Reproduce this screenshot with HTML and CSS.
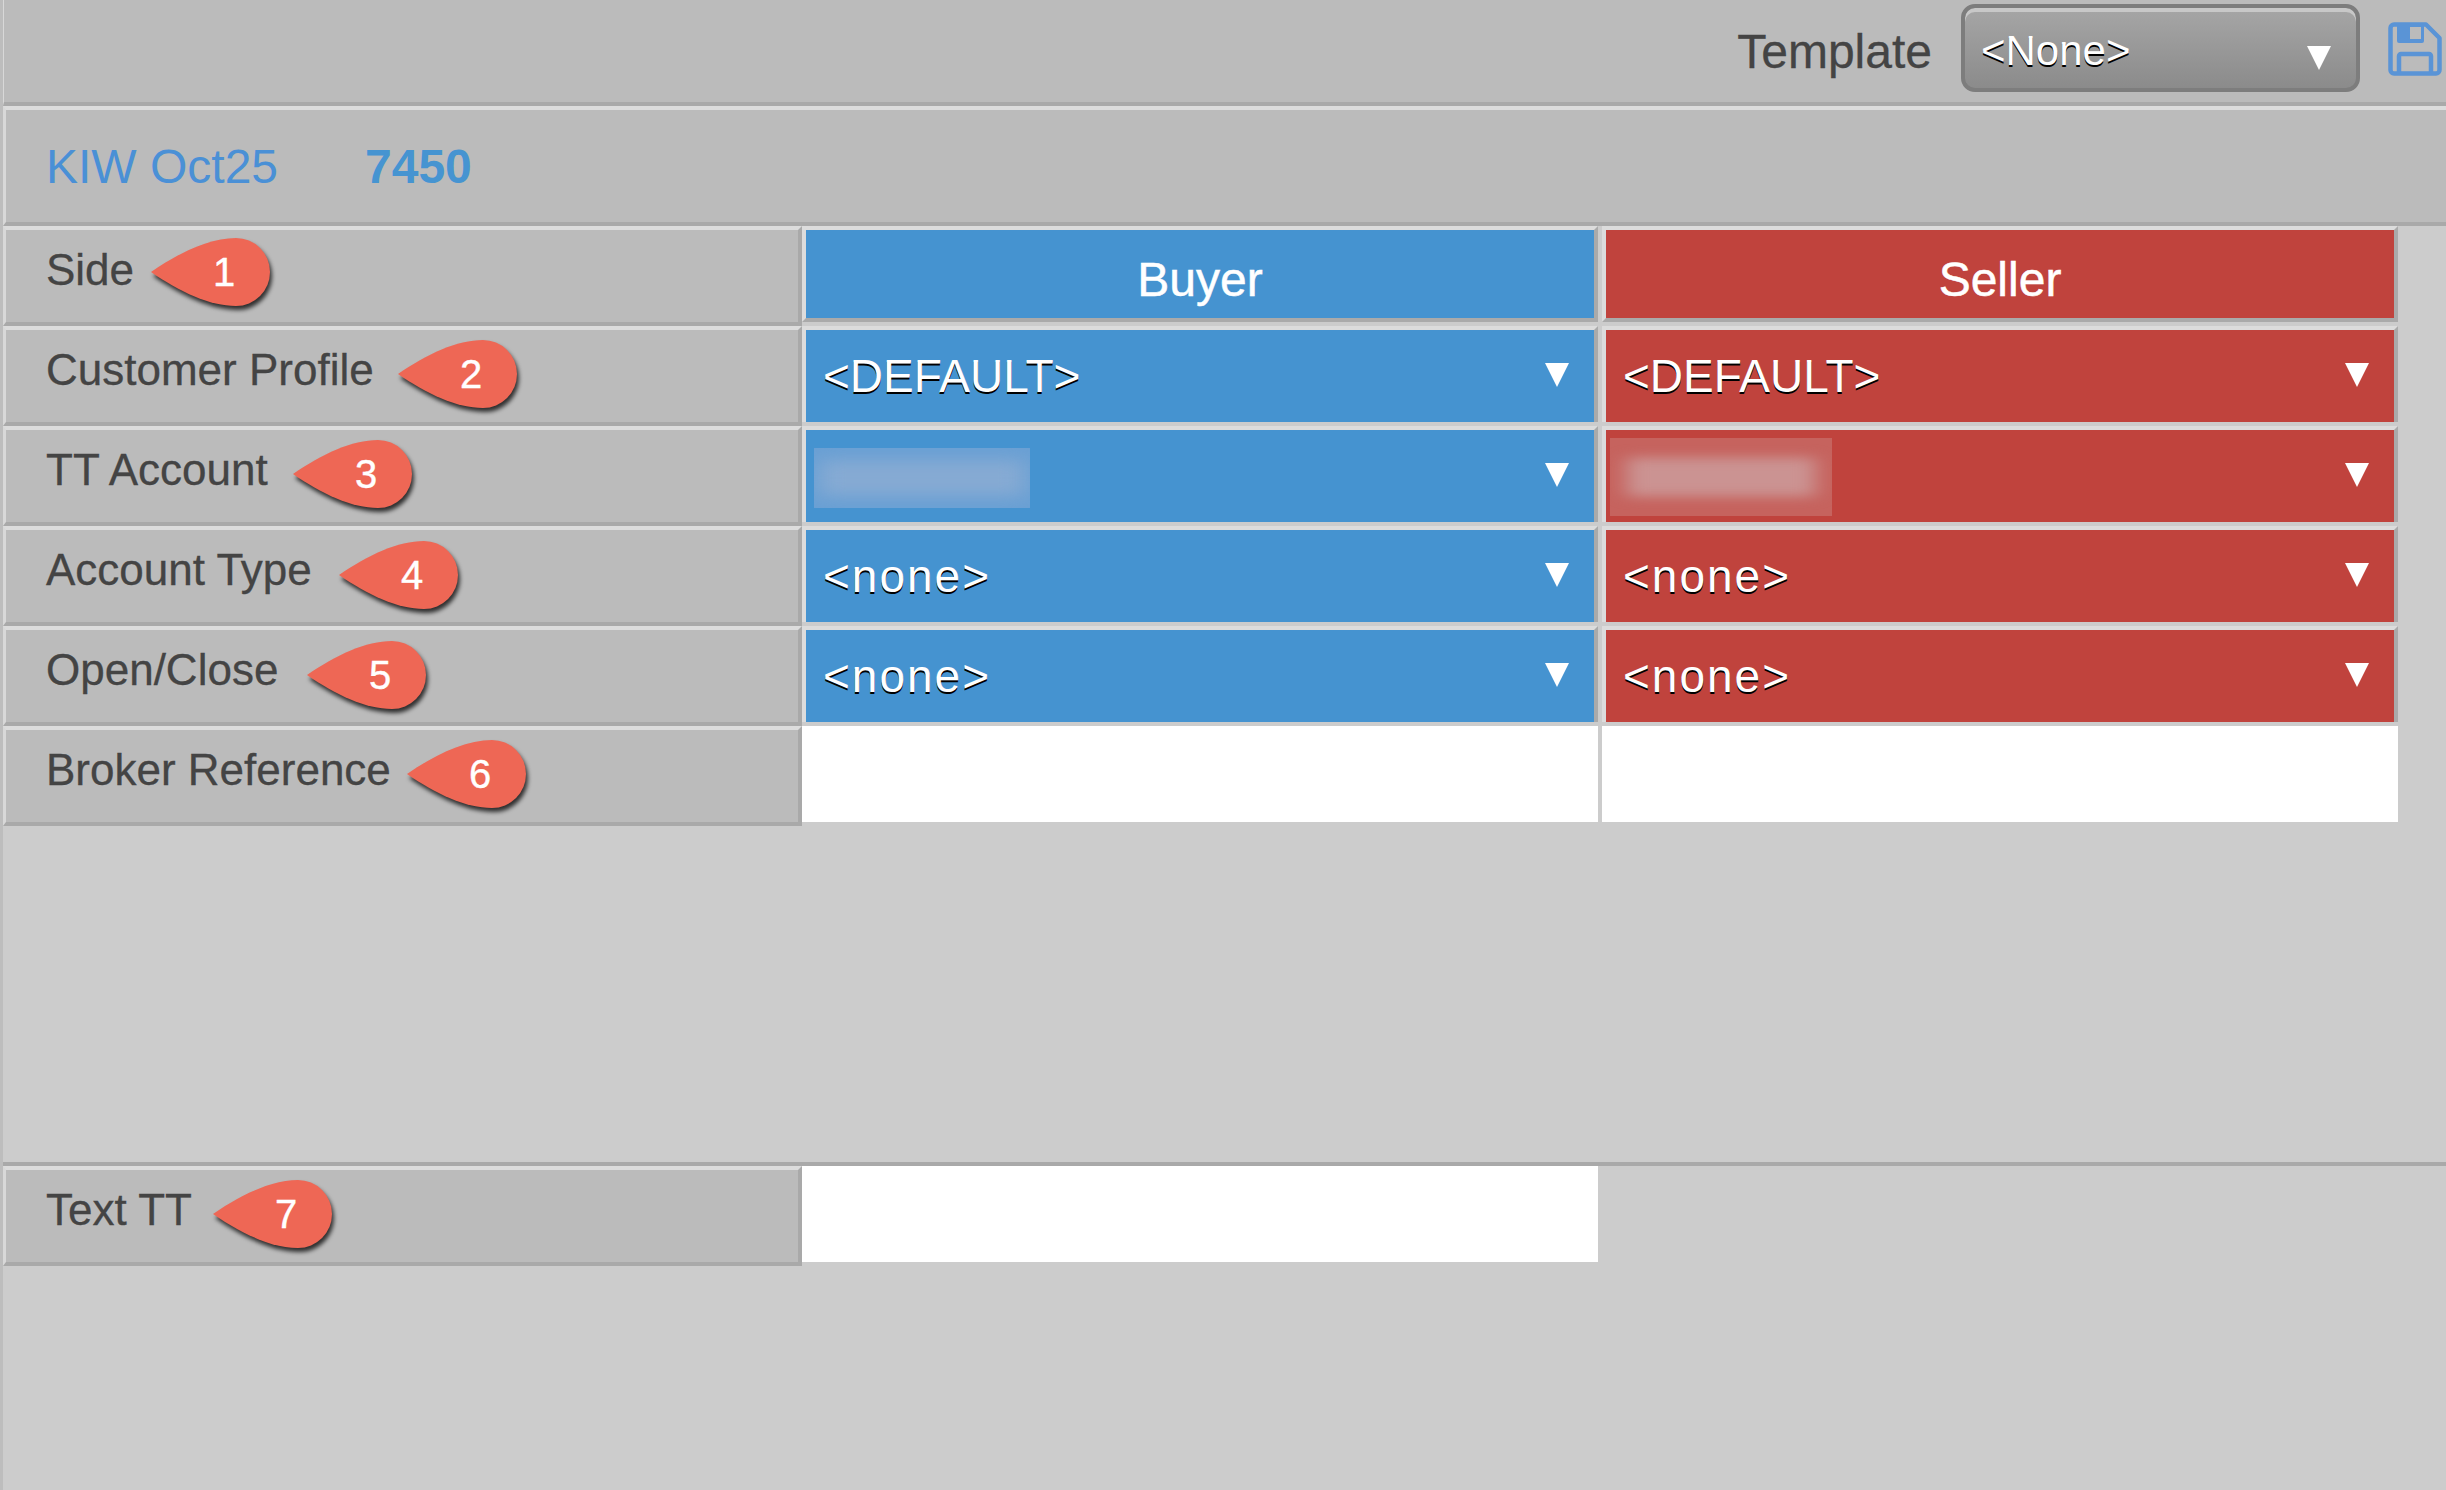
FILE: index.html
```html
<!DOCTYPE html>
<html lang="en">
<head>
<meta charset="utf-8">
<title>Order ticket</title>
<link rel="stylesheet" href="styles.css">
</head>
<body>
<div class="app">
  <header class="toolbar">
    <span class="template-label">Template</span>
    <div class="template-select">
      <span>&lt;None&gt;</span>
      <svg class="arrow" viewBox="0 0 24 24"><path d="M0 0H24L12 24Z"/></svg>
    </div>
    <svg class="save" viewBox="0 0 54 54" fill="none">
      <path d="M6 2.5H38L51.5 16V48A3.5 3.5 0 0 1 48 51.5H6A3.5 3.5 0 0 1 2.5 48V6A3.5 3.5 0 0 1 6 2.5Z" stroke="#5a94d6" stroke-width="4.5" stroke-linejoin="round"/>
      <path d="M9 4H36V19A2 2 0 0 1 34 21H11A2 2 0 0 1 9 19Z" fill="#5a94d6"/>
      <rect x="22" y="5" width="11" height="12" fill="#bbbbbb"/>
      <path d="M11 50V34A2 2 0 0 1 13 32H41A2 2 0 0 1 43 34V50" stroke="#5a94d6" stroke-width="4.5"/>
    </svg>
  </header>

  <div class="title-row">
    <span class="instrument">KIW Oct25</span>
    <span class="price">7450</span>
  </div>

  <div class="form-grid">
    <div class="label">Side
      <div class="marker m1"><svg viewBox="0 0 120 68"><path d="M1 34C30 14 60 0 86 0A34 34 0 0 1 86 68C60 68 30 54 1 34Z"/></svg><span>1</span></div>
    </div>
    <div class="cell head buyer">Buyer</div>
    <div class="cell head seller">Seller</div>

    <div class="label">Customer Profile
      <div class="marker m2"><svg viewBox="0 0 120 68"><path d="M1 34C30 14 60 0 86 0A34 34 0 0 1 86 68C60 68 30 54 1 34Z"/></svg><span>2</span></div>
    </div>
    <div class="cell dropdown buyer"><span class="value">&lt;DEFAULT&gt;</span><svg class="arrow" viewBox="0 0 24 24"><path d="M0 0H24L12 24Z"/></svg></div>
    <div class="cell dropdown seller"><span class="value">&lt;DEFAULT&gt;</span><svg class="arrow" viewBox="0 0 24 24"><path d="M0 0H24L12 24Z"/></svg></div>

    <div class="label">TT Account
      <div class="marker m3"><svg viewBox="0 0 120 68"><path d="M1 34C30 14 60 0 86 0A34 34 0 0 1 86 68C60 68 30 54 1 34Z"/></svg><span>3</span></div>
    </div>
    <div class="cell dropdown buyer"><div class="redact redact-buyer"><div class="smear"></div></div><svg class="arrow" viewBox="0 0 24 24"><path d="M0 0H24L12 24Z"/></svg></div>
    <div class="cell dropdown seller"><div class="redact redact-seller"><div class="smear"></div></div><svg class="arrow" viewBox="0 0 24 24"><path d="M0 0H24L12 24Z"/></svg></div>

    <div class="label">Account Type
      <div class="marker m4"><svg viewBox="0 0 120 68"><path d="M1 34C30 14 60 0 86 0A34 34 0 0 1 86 68C60 68 30 54 1 34Z"/></svg><span>4</span></div>
    </div>
    <div class="cell dropdown buyer"><span class="value lower">&lt;none&gt;</span><svg class="arrow" viewBox="0 0 24 24"><path d="M0 0H24L12 24Z"/></svg></div>
    <div class="cell dropdown seller"><span class="value lower">&lt;none&gt;</span><svg class="arrow" viewBox="0 0 24 24"><path d="M0 0H24L12 24Z"/></svg></div>

    <div class="label">Open/Close
      <div class="marker m5"><svg viewBox="0 0 120 68"><path d="M1 34C30 14 60 0 86 0A34 34 0 0 1 86 68C60 68 30 54 1 34Z"/></svg><span>5</span></div>
    </div>
    <div class="cell dropdown buyer"><span class="value lower">&lt;none&gt;</span><svg class="arrow" viewBox="0 0 24 24"><path d="M0 0H24L12 24Z"/></svg></div>
    <div class="cell dropdown seller"><span class="value lower">&lt;none&gt;</span><svg class="arrow" viewBox="0 0 24 24"><path d="M0 0H24L12 24Z"/></svg></div>

    <div class="label">Broker Reference
      <div class="marker m6"><svg viewBox="0 0 120 68"><path d="M1 34C30 14 60 0 86 0A34 34 0 0 1 86 68C60 68 30 54 1 34Z"/></svg><span>6</span></div>
    </div>
    <div class="cell input"></div>
    <div class="cell input"></div>
  </div>

  <div class="spacer"></div>

  <div class="form-grid">
    <div class="label">Text TT
      <div class="marker m7"><svg viewBox="0 0 120 68"><path d="M1 34C30 14 60 0 86 0A34 34 0 0 1 86 68C60 68 30 54 1 34Z"/></svg><span>7</span></div>
    </div>
    <div class="cell input"></div>
  </div>
</div>
</body>
</html>
```

FILE: styles.css
```css
* { box-sizing: border-box; }

html, body {
  margin: 0;
  height: 1490px;
  overflow: hidden;
  background: #cccccc;
  font-family: "Liberation Sans", Arial, sans-serif;
}

.app {
  display: flex;
  flex-direction: column;
  height: 1490px;
  border-left: 3px solid #bdbdbd;
}

.toolbar {
  display: flex;
  align-items: center;
  justify-content: flex-end;
  flex: none;
  height: 106px;
  padding: 0 4px 0 0;
  background: #bbbbbb;
  border-left: 1px solid #d8d8d8;
  border-bottom: 4px solid #a9a9a9;
}

.template-label {
  margin-right: 29px;
  font-size: 48px;
  color: #444444;
  -webkit-text-stroke: 0.3px #444444;
}

.template-select {
  display: flex;
  align-items: center;
  justify-content: space-between;
  width: 399px;
  height: 88px;
  margin-bottom: 6px;
  margin-right: 28px;
  padding: 6px 25px 0 16px;
  border: 4px solid #7d7d7d;
  border-radius: 14px;
  background: linear-gradient(#a6a6a6, #8b8b8b);
  box-shadow: inset 0 4px 0 #c8c8c8;
  font-size: 42px;
  color: #ffffff;
  text-shadow: 0 2px 0 #000000;
}

.template-select .arrow {
  margin-top: 14px;
}

.save {
  width: 54px;
  height: 54px;
  margin-bottom: 4px;
  flex: none;
}

.arrow {
  width: 24px;
  height: 24px;
  flex: none;
  fill: #ffffff;
}

.title-row {
  display: flex;
  align-items: center;
  flex: none;
  height: 120px;
  padding-left: 40px;
  background: #bbbbbb;
  border-top: 4px solid #dcdcdc;
  border-bottom: 4px solid #a9a9a9;
  border-left: 3px solid #d8d8d8;
  font-size: 48px;
  color: #4a90d6;
}

.instrument {
  width: 319px;
}

.price {
  font-weight: 700;
  color: #4694d1;
}

.form-grid {
  display: grid;
  grid-template-columns: 799px 800px 796px;
  grid-auto-rows: 100px;
  flex: none;
}

.label {
  position: relative;
  display: flex;
  align-items: center;
  padding: 0 0 12px 40px;
  background: #bbbbbb;
  border-top: 4px solid #dcdcdc;
  border-bottom: 4px solid #a9a9a9;
  border-left: 3px solid #d8d8d8;
  border-right: 4px solid #a9a9a9;
  font-size: 44px;
  color: #444444;
  -webkit-text-stroke: 0.3px #444444;
}

.cell {
  margin-bottom: 4px;
}

.buyer,
.input:nth-child(3n + 2) {
  margin-right: 4px;
}

.head,
.dropdown {
  border-top: 4px solid #dcdcdc;
  border-left: 4px solid #dcdcdc;
  border-right: 4px solid #aaaaaa;
  color: #ffffff;
}

.head {
  display: flex;
  align-items: center;
  justify-content: center;
  padding-top: 10px;
  border-bottom: 4px solid #aaaaaa;
  font-size: 48px;
  -webkit-text-stroke: 0.5px #ffffff;
}

.dropdown {
  display: flex;
  align-items: center;
  justify-content: space-between;
  padding: 0 25px 0 17px;
  font-size: 46px;
}

.dropdown .arrow {
  align-self: flex-start;
  margin-top: 33px;
}

.value {
  text-shadow: 0 2px 0 #000000;
}

.lower {
  letter-spacing: 2px;
}

.buyer { background-color: #4593d0; background-clip: padding-box; }
.seller { background-color: #c0433d; background-clip: padding-box; }

.input {
  background: #ffffff;
}

.redact {
  overflow: hidden;
}

.redact-buyer {
  width: 216px;
  height: 60px;
  margin: 4px 0 0 -9px;
  background: #6aa0d4;
}

.redact-seller {
  width: 222px;
  height: 78px;
  margin: 2px 0 0 -13px;
  background: #c6635e;
}

.smear {
  width: 100%;
  height: 100%;
  filter: blur(12px);
  transform: scale(0.85, 0.5);
  background: #cb9392;
}

.redact-buyer .smear {
  background: #86aad3;
  transform: scale(0.95, 0.6);
}

.marker {
  position: absolute;
  width: 120px;
  height: 68px;
}

.marker svg {
  display: block;
  width: 120px;
  height: 68px;
  fill: #ee6755;
  filter: drop-shadow(2px 4px 2px rgba(0, 0, 0, 0.75));
}

.marker span {
  position: absolute;
  left: 54px;
  top: 0;
  width: 40px;
  height: 68px;
  line-height: 68px;
  text-align: center;
  font-size: 40px;
  color: #ffffff;
  -webkit-text-stroke: 0.4px #ffffff;
}

.m1 { left: 144px; top: 8px; }
.m2 { left: 391px; top: 10px; }
.m3 { left: 286px; top: 10px; }
.m4 { left: 332px; top: 11px; }
.m5 { left: 300px; top: 11px; }
.m6 { left: 400px; top: 10px; }
.m7 { left: 206px; top: 10px; }

.spacer {
  flex: none;
  height: 340px;
  border-bottom: 4px solid #a9a9a9;
}
```
